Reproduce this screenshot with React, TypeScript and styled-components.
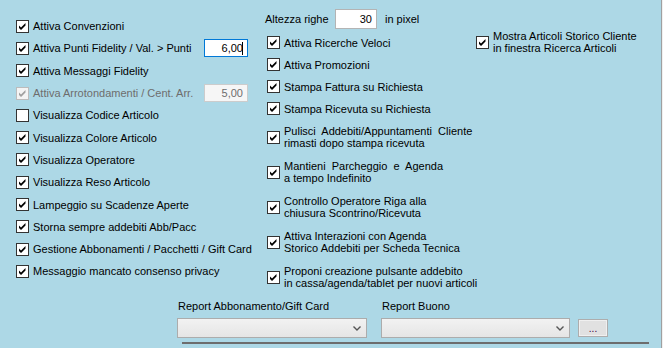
import * as React from 'react';
import styled, { createGlobalStyle } from 'styled-components';

const GlobalStyle = createGlobalStyle`
  html, body {
    margin: 0;
    padding: 0;
  }
  body {
    font-family: "Liberation Sans", Arial, sans-serif;
    font-size: 11px;
    color: #000;
  }
`;

const Frame = styled.div`
  width: 663px;
  height: 348px;
  background: #f0f0f0;
`;

const Panel = styled.div`
  box-sizing: border-box;
  width: 662px;
  height: 348px;
  background: #add8e6;
  border-right: 1px solid #a0a0a0;
  display: flex;
  flex-direction: column;
`;

const Top = styled.div`
  display: flex;
  height: 295px;
  padding-left: 16px;
`;

const LeftCol = styled.div`
  width: 232px;
  padding-top: 15px;
  display: flex;
  flex-direction: column;
  white-space: nowrap;
`;

const MiddleCol = styled.div`
  width: 211px;
  margin-left: 17px;
  padding-top: 9px;
  display: flex;
  flex-direction: column;
  white-space: nowrap;
`;

const RightCol = styled.div`
  padding-top: 31px;
  white-space: nowrap;
`;

const Row = styled.div<{ $h: number; $indent?: number }>`
  display: flex;
  align-items: center;
  justify-content: space-between;
  height: ${(p) => p.$h}px;
  padding-left: ${(p) => p.$indent ?? 0}px;
`;

const Label = styled.label<{ $disabled?: boolean }>`
  display: flex;
  align-items: center;
  gap: 4px;
  line-height: 13px;
  color: ${(p) => (p.$disabled ? '#6d6d6d' : '#000')};
`;

const LabelText = styled.span`
  line-height: 12px;
  white-space: pre;
`;

const Box = styled.span<{ $disabled?: boolean }>`
  box-sizing: border-box;
  flex: none;
  width: 13px;
  height: 13px;
  border: 1px solid ${(p) => (p.$disabled ? '#bcbcbc' : '#333')};
  background: ${(p) => (p.$disabled ? '#f4f4f4' : '#fff')};
  display: flex;
  align-items: center;
  justify-content: center;
`;

const NumBox = styled.div<{ $focus?: boolean; $disabled?: boolean; $w: number; $h: number }>`
  box-sizing: border-box;
  width: ${(p) => p.$w}px;
  height: ${(p) => p.$h}px;
  background: ${(p) => (p.$disabled ? '#f6f6f6' : '#fff')};
  border: 1px solid ${(p) => (p.$focus ? '#0078d7' : p.$disabled ? '#cccccc' : '#b4b4b4')};
  color: ${(p) => (p.$disabled ? '#6d6d6d' : '#000')};
  display: flex;
  align-items: center;
  justify-content: flex-end;
  padding-right: 4px;
  font-size: 11px;
`;

const Caret = styled.span`
  width: 1px;
  height: 13px;
  background: #000;
  margin-left: -1px;
`;

const HeightRow = styled.div`
  display: flex;
  align-items: center;
  height: 20px;
  margin-bottom: 2.5px;
`;

const HeightLabel = styled.span`
  width: 70px;
`;

const Unit = styled.span`
  margin-left: 8px;
`;

const Bottom = styled.div`
  display: flex;
  align-items: flex-end;
  padding-left: 177px;
  padding-top: 5px;
`;

const Field = styled.div<{ $gap: number }>`
  display: flex;
  flex-direction: column;
  margin-right: ${(p) => p.$gap}px;
`;

const FieldLabel = styled.div`
  line-height: 13px;
  margin: 0 0 5px 1px;
`;

const Combo = styled.div<{ $w: number }>`
  box-sizing: border-box;
  width: ${(p) => p.$w}px;
  height: 20px;
  border: 1px solid #acacac;
  background: linear-gradient(#f2f2f2, #e5e5e5);
  display: flex;
  align-items: center;
  justify-content: flex-end;
  padding-right: 5px;
`;

const DotsButton = styled.div`
  box-sizing: border-box;
  width: 30px;
  height: 18px;
  margin-bottom: 1px;
  border: 1px solid #adadad;
  background: #e1e1e1;
  box-shadow: inset 0 0 0 1px #f0f0f0;
  color: #3c0040;
  font-size: 10px;
  display: flex;
  justify-content: center;
  align-items: flex-end;
  padding-bottom: 3px;
  line-height: 8px;
`;

const Divider = styled.div`
  margin: 4px 0 0 182px;
  width: 467px;
  height: 2px;
  background: #6d6d6d;
`;

const Check: React.FC<{ disabled?: boolean }> = ({ disabled }) => (
  <svg width="9" height="9" viewBox="0 0 9 9">
    <polygon
      points="1,3.5 3,5.5 7.5,1 7.5,3.5 3,8 1,6"
      fill={disabled ? '#a0a0a0' : '#000'}
    />
  </svg>
);

const CheckBox: React.FC<{
  checked?: boolean;
  disabled?: boolean;
  children: React.ReactNode;
}> = ({ checked = true, disabled, children }) => (
  <Label $disabled={disabled}>
    <Box $disabled={disabled}>{checked && <Check disabled={disabled} />}</Box>
    <LabelText>{children}</LabelText>
  </Label>
);

const Chevron = () => (
  <svg width="8" height="5" viewBox="0 0 8 5">
    <polyline points="0.5,0.5 4,4 7.5,0.5" fill="none" stroke="#555" strokeWidth="1.4" />
  </svg>
);

const leftItems = [
  'Visualizza Codice Articolo',
  'Visualizza Colore Articolo',
  'Visualizza Operatore',
  'Visualizza Reso Articolo',
  'Lampeggio su Scadenze Aperte',
  'Storna sempre addebiti Abb/Pacc',
  'Gestione Abbonamenti / Pacchetti / Gift Card',
  'Messaggio mancato consenso privacy',
];

const middleSingle = [
  'Attiva Ricerche Veloci',
  'Attiva Promozioni',
  'Stampa Fattura su Richiesta',
  'Stampa Ricevuta su Richiesta',
];

const middleDouble: [string, string][] = [
  ['Pulisci  Addebiti/Appuntamenti  Cliente', 'rimasti dopo stampa ricevuta'],
  ['Mantieni  Parcheggio  e  Agenda', 'a tempo Indefinito'],
  ['Controllo Operatore Riga alla', 'chiusura Scontrino/Ricevuta'],
  ['Attiva Interazioni con Agenda', 'Storico Addebiti per Scheda Tecnica'],
  ['Proponi creazione pulsante addebito', 'in cassa/agenda/tablet per nuovi articoli'],
];

const App: React.FC = () => {
  return (
    <>
      <GlobalStyle />
      <Frame>
        <Panel>
          <Top>
            <LeftCol>
              <Row $h={22.3}>
                <CheckBox>Attiva Convenzioni</CheckBox>
              </Row>
              <Row $h={22.3}>
                <CheckBox>Attiva Punti Fidelity / Val. &gt; Punti</CheckBox>
                <NumBox $focus $w={44} $h={18}>
                  6,00
                  <Caret />
                </NumBox>
              </Row>
              <Row $h={22.3}>
                <CheckBox>Attiva Messaggi Fidelity</CheckBox>
              </Row>
              <Row $h={22.3}>
                <CheckBox disabled>Attiva Arrotondamenti / Cent. Arr.</CheckBox>
                <NumBox $disabled $w={44} $h={18}>
                  5,00
                </NumBox>
              </Row>
              {leftItems.map((t, i) => (
                <Row key={t} $h={22.3}>
                  <CheckBox checked={i !== 0}>{t}</CheckBox>
                </Row>
              ))}
            </LeftCol>
            <MiddleCol>
              <HeightRow>
                <HeightLabel>Altezza righe</HeightLabel>
                <NumBox $w={42} $h={20}>
                  30
                </NumBox>
                <Unit>in pixel</Unit>
              </HeightRow>
              {middleSingle.map((t) => (
                <Row key={t} $h={22} $indent={2}>
                  <CheckBox>{t}</CheckBox>
                </Row>
              ))}
              {middleDouble.map(([a, b]) => (
                <Row key={a} $h={35} $indent={2}>
                  <CheckBox>
                    {a}
                    {'\n'}
                    {b}
                  </CheckBox>
                </Row>
              ))}
            </MiddleCol>
            <RightCol>
              <Row $h={22}>
                <CheckBox>
                  {'Mostra Articoli Storico Cliente\nin finestra Ricerca Articoli'}
                </CheckBox>
              </Row>
            </RightCol>
          </Top>
          <Bottom>
            <Field $gap={14}>
              <FieldLabel>Report Abbonamento/Gift Card</FieldLabel>
              <Combo $w={190}>
                <Chevron />
              </Combo>
            </Field>
            <Field $gap={8}>
              <FieldLabel>Report Buono</FieldLabel>
              <Combo $w={189}>
                <Chevron />
              </Combo>
            </Field>
            <DotsButton>...</DotsButton>
          </Bottom>
          <Divider />
        </Panel>
      </Frame>
    </>
  );
};

export default App;
